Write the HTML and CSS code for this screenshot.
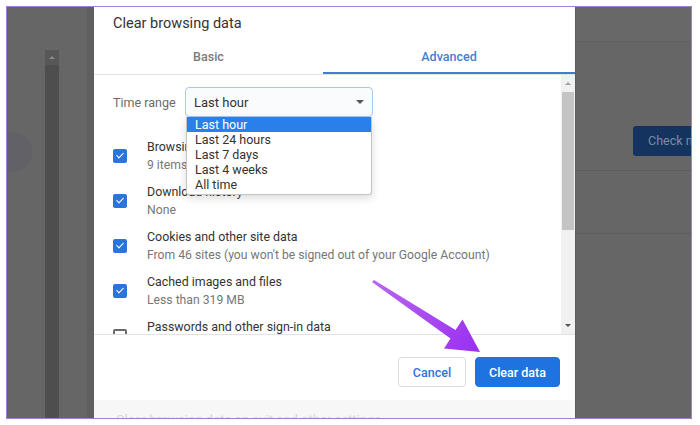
FILE: index.html
```html
<!DOCTYPE html>
<html lang="en">
<head>
  <meta charset="UTF-8" />
  <title>Clear browsing data</title>
  <link rel="stylesheet" href="styles.css">
</head>
<body>

  <div class="frame">

    <div class="side-left">
      <div class="avatar-col"><div class="avatar"></div></div>
      <div class="rail"><div class="rail-cap"><span class="tri-up"></span></div></div>
      <div class="side-fill"></div>
      <div class="side-edge"></div>
    </div>

    <div class="dialog">
      <h1 class="title">Clear browsing data</h1>

      <div class="tabs">
        <div class="tab">Basic</div>
        <div class="tab active">Advanced</div>
      </div>

      <div class="scroll">
        <div class="scroll-body">
          <div class="range-row">
            <span class="range-label">Time range</span>
            <div class="select">
              <span>Last hour</span>
              <span class="tri-down"></span>
            </div>
            <ul class="dropdown">
              <li class="selected">Last hour</li>
              <li>Last 24 hours</li>
              <li>Last 7 days</li>
              <li>Last 4 weeks</li>
              <li>All time</li>
            </ul>
          </div>

          <div class="item">
            <span class="check on"></span>
            <div class="item-text">
              <div class="item-title">Browsing history</div>
              <div class="item-sub">9 items</div>
            </div>
          </div>
          <div class="item">
            <span class="check on"></span>
            <div class="item-text">
              <div class="item-title">Download history</div>
              <div class="item-sub">None</div>
            </div>
          </div>
          <div class="item">
            <span class="check on"></span>
            <div class="item-text">
              <div class="item-title">Cookies and other site data</div>
              <div class="item-sub">From 46 sites (you won't be signed out of your Google Account)</div>
            </div>
          </div>
          <div class="item">
            <span class="check on"></span>
            <div class="item-text">
              <div class="item-title">Cached images and files</div>
              <div class="item-sub">Less than 319 MB</div>
            </div>
          </div>
          <div class="item">
            <span class="check"></span>
            <div class="item-text">
              <div class="item-title">Passwords and other sign-in data</div>
              <div class="item-sub">None</div>
            </div>
          </div>
        </div>

        <div class="scrollbar">
          <div class="sb-btn"><span class="sb-up"></span></div>
          <div class="sb-thumb"></div>
          <div class="sb-fill"></div>
          <div class="sb-btn"><span class="sb-down"></span></div>
        </div>
      </div>

      <div class="footer">
        <button class="btn btn-cancel">Cancel</button>
        <button class="btn btn-primary">Clear data</button>
      </div>

      <div class="below">Clear browsing data on exit and other settings</div>
    </div>

    <div class="side-right">
      <div class="band"></div>
      <div class="check-row">
        <div class="check-now">Check now</div>
      </div>
      <div class="plain-row"></div>
    </div>

    <svg class="arrow" width="700" height="425" viewBox="0 0 700 425">
      <defs>
        <linearGradient id="ag" x1="373" y1="281" x2="480" y2="352" gradientUnits="userSpaceOnUse">
          <stop offset="0" stop-color="#b866ef" />
          <stop offset="1" stop-color="#9a2ff2" />
        </linearGradient>
      </defs>
      <polygon fill="url(#ag)" points="374,280 455.5,330 462.5,319.5 480,352 444,348.5 450.5,338.5 372,282" />
    </svg>

  </div>

</body>
</html>
```

FILE: styles.css
```css
body {
  margin: 0;
  background: #ffffff;
  font-family: Roboto, "Liberation Sans", sans-serif;
}

.frame {
  position: relative;
  margin: 6px 0 0 6px;
  width: 684px;
  height: 411px;
  border: 1px solid #a77bd8;
  background: #666666;
  display: flex;
  overflow: hidden;
}

/* left backdrop */
.side-left {
  width: 87px;
  display: flex;
  flex-shrink: 0;
}

.avatar-col {
  width: 38px;
}

.avatar {
  width: 40px;
  height: 40px;
  margin: 125px 0 0 -15px;
  border-radius: 50%;
  background: #616167;
}

.rail {
  width: 14px;
  margin-top: 43px;
  background: #4e4e4e;
}

.rail-cap {
  height: 15px;
  background: #575757;
  display: flex;
  justify-content: center;
  align-items: center;
}

.tri-up {
  border-left: 3px solid transparent;
  border-right: 3px solid transparent;
  border-bottom: 3px solid #8a8a8a;
}

.side-fill {
  flex: 1;
}

.side-edge {
  width: 7px;
  background: #5f5f5f;
}

/* dialog */
.dialog {
  width: 481px;
  flex-shrink: 0;
  background: #ffffff;
  display: flex;
  flex-direction: column;
}

.title {
  margin: 0;
  padding: 8px 0 7px 19px;
  font-size: 14.5px;
  line-height: 18px;
  font-weight: 400;
  color: #333333;
}

.tabs {
  display: grid;
  grid-template-columns: 229px 1fr;
  border-bottom: 1px solid #e3e3e3;
}

.tab {
  height: 34px;
  line-height: 34px;
  text-align: center;
  font-size: 12.5px;
  font-weight: 500;
  color: #7a7a7a;
}

.tab.active {
  color: #3f7fd0;
  box-shadow: inset 0 -2px 0 #3f7fd0;
}

.scroll {
  height: 259px;
  display: flex;
}

.scroll-body {
  flex: 1;
  overflow: hidden;
  padding: 12px 0 0 19px;
}

.range-row {
  position: relative;
  display: flex;
  align-items: center;
  height: 30px;
}

.range-label {
  width: 72px;
  font-size: 12.5px;
  color: #6b6b6b;
}

.select {
  box-sizing: border-box;
  width: 188px;
  height: 30px;
  padding: 0 8px;
  border: 1px solid #a9c9ee;
  border-radius: 4px;
  background: #fafbfc;
  display: flex;
  align-items: center;
  justify-content: space-between;
  font-size: 13px;
  color: #333333;
}

.tri-down {
  border-left: 4px solid transparent;
  border-right: 4px solid transparent;
  border-top: 4px solid #555555;
}

.dropdown {
  position: absolute;
  top: 30px;
  left: 73px;
  width: 186px;
  box-sizing: border-box;
  margin: 0;
  padding: 0 0 2px;
  list-style: none;
  background: #ffffff;
  border: 1px solid #c4c4c4;
  border-top: none;
  border-radius: 0 0 3px 3px;
  box-shadow: 0 3px 8px rgba(0, 0, 0, 0.15);
  font-size: 12.5px;
  color: #333333;
  z-index: 2;
}

.dropdown li {
  height: 15px;
  line-height: 15px;
  padding-left: 8px;
}

.dropdown li.selected {
  background: #2a7fe8;
  color: #ffffff;
}

.item {
  display: flex;
  align-items: flex-start;
  height: 45px;
}

.range-row + .item {
  margin-top: 21px;
}

.check {
  box-sizing: border-box;
  width: 14px;
  height: 14px;
  margin: 11px 20px 0 0;
  border: 2px solid #6b6b6b;
  border-radius: 2px;
  position: relative;
}

.check.on {
  background: #2a74dc;
  border-color: #2a74dc;
}

.check.on::after {
  content: "";
  position: absolute;
  left: 3px;
  top: 0px;
  width: 3px;
  height: 6px;
  border-right: 1.6px solid #ffffff;
  border-bottom: 1.6px solid #ffffff;
  transform: rotate(45deg);
}

.item-title {
  font-size: 12.4px;
  line-height: 18px;
  color: #333333;
}

.item-sub {
  font-size: 12.2px;
  line-height: 18px;
  color: #777777;
}

.scrollbar {
  width: 14px;
  background: #f1f1f1;
  display: flex;
  flex-direction: column;
}

.sb-btn {
  height: 17px;
  display: flex;
  justify-content: center;
  align-items: center;
}

.sb-up {
  border-left: 3px solid transparent;
  border-right: 3px solid transparent;
  border-bottom: 3px solid #a3a3a3;
}

.sb-down {
  border-left: 3px solid transparent;
  border-right: 3px solid transparent;
  border-top: 3px solid #505050;
}

.sb-thumb {
  height: 138px;
  margin: 0 1px;
  background: #c4c4c4;
}

.sb-fill {
  flex: 1;
}

.footer {
  height: 66px;
  box-sizing: border-box;
  border-top: 1px solid #e2e2e2;
  padding: 22px 15px 0 0;
  display: flex;
  justify-content: flex-end;
  align-items: flex-start;
  gap: 9px;
}

.btn {
  height: 30px;
  border-radius: 4px;
  font-family: Roboto, "Liberation Sans", sans-serif;
  font-size: 12.5px;
  font-weight: 500;
  cursor: pointer;
}

.btn-cancel {
  width: 68px;
  background: #ffffff;
  border: 1px solid #dadce0;
  color: #2a74dc;
}

.btn-primary {
  width: 85px;
  background: #1f73e0;
  border: 1px solid #1f73e0;
  color: #ffffff;
}

.below {
  flex: 1;
  overflow: hidden;
  background: #f7f7f7;
  padding: 12px 0 0 22px;
  font-size: 13px;
  color: #d6d6d6;
  white-space: nowrap;
}

/* right backdrop */
.side-right {
  flex: 1;
  display: flex;
  flex-direction: column;
  border-left: 1px solid #5c5c5c;
}

.band {
  height: 34px;
  background: #686868;
  border-bottom: 1px solid #606060;
}

.check-row {
  height: 129px;
  box-sizing: border-box;
  padding: 84px 0 0 57px;
  border-bottom: 1px solid #5b5b5b;
}

.check-now {
  width: 70px;
  height: 30px;
  line-height: 30px;
  padding-left: 15px;
  border-radius: 3px;
  background: #14335e;
  color: #7d8ca3;
  font-size: 12.5px;
  white-space: nowrap;
}

.plain-row {
  height: 62px;
  border-bottom: 1px solid #5d5d5d;
}

.arrow {
  position: absolute;
  left: -7px;
  top: -7px;
  pointer-events: none;
}
```
